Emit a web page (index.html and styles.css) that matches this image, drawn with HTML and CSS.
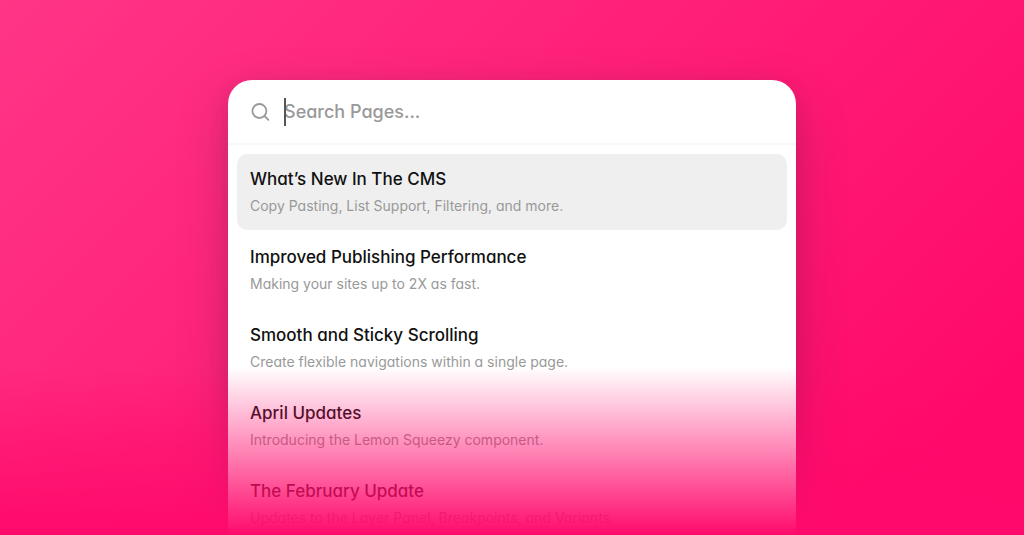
FILE: index.html
```html
<!DOCTYPE html>
<html lang="en">
<head>
<meta charset="UTF-8">
<meta name="viewport" content="width=device-width, initial-scale=1.0">
<title>Search Pages</title>
<link rel="stylesheet" href="styles.css">
</head>
<body>

<main class="stage">
    <div class="panel">
        <form class="search" role="search">
            <label class="search-icon" for="searchInput" aria-label="Search pages">
                <svg width="20" height="20" viewBox="0 0 20 20" fill="none" stroke="#999" stroke-width="1.8" stroke-linecap="round">
                    <circle cx="9.4" cy="9" r="7"/>
                    <path d="M14.5 14L18.4 17.8"/>
                </svg>
            </label>
            <div class="search-field">
                <input type="text" id="searchInput" name="search" placeholder="Search Pages..." autocomplete="off">
                <span class="caret"></span>
            </div>
        </form>
        <ul class="results">
            <li><a class="result active" href="#">
                <span class="result-title">What’s New In The CMS</span>
                <span class="result-text">Copy Pasting, List Support, Filtering, and more.</span>
            </a></li>
            <li><a class="result" href="#">
                <span class="result-title">Improved Publishing Performance</span>
                <span class="result-text">Making your sites up to 2X as fast.</span>
            </a></li>
            <li><a class="result" href="#">
                <span class="result-title">Smooth and Sticky Scrolling</span>
                <span class="result-text">Create flexible navigations within a single page.</span>
            </a></li>
            <li><a class="result" href="#">
                <span class="result-title">April Updates</span>
                <span class="result-text">Introducing the Lemon Squeezy component.</span>
            </a></li>
            <li><a class="result" href="#">
                <span class="result-title">The February Update</span>
                <span class="result-text">Updates to the Layer Panel, Breakpoints, and Variants.</span>
            </a></li>
        </ul>
    </div>
    <div class="fade"></div>
</main>

</body>
</html>
```

FILE: styles.css
```css
* {
    box-sizing: border-box;
}

body {
    margin: 0;
    font-family: Inter, "Liberation Sans", sans-serif;
    /* single-storey a */
    font-feature-settings: "cv11";
}

.stage {
    position: relative;
    display: flex;
    justify-content: center;
    align-items: flex-start;
    height: 100vh;
    padding: 80px 20px 0;
    overflow: hidden;
    background: linear-gradient(135deg, #ff3586 0%, #ff0064 110%);
}

.panel {
    width: 100%;
    max-width: 568px;
    background: #fff;
    border-radius: 24px;
    box-shadow: 0 20px 50px rgba(60, 30, 60, 0.25), 0 4px 20px rgba(60, 30, 60, 0.1);
}

.search {
    display: flex;
    align-items: center;
    gap: 14px;
    height: 65px;
    padding: 0 22px;
    border-bottom: 2px solid #f8f8f8;
}

.search-icon {
    display: flex;
}

.search-field {
    position: relative;
    flex: 1;
}

.search-field input {
    display: block;
    width: 100%;
    height: 28px;
    padding: 0;
    border: none;
    outline: none;
    background: none;
    color: #111;
    font-family: inherit;
    font-feature-settings: inherit;
    font-size: 18px;
    font-weight: 500;
}

.search-field input::placeholder {
    color: #999;
    opacity: 1;
}

.caret {
    position: absolute;
    top: 0;
    left: 0;
    width: 2px;
    height: 28px;
    background: #555;
}

.results {
    display: flex;
    flex-direction: column;
    gap: 2px;
    margin: 0;
    padding: 9px;
    list-style: none;
}

.result {
    display: flex;
    flex-direction: column;
    gap: 4px;
    padding: 13px;
    border-radius: 10px;
    text-decoration: none;
}

.result.active {
    background: #efefef;
}

.result-title {
    color: #111;
    font-size: 17px;
    font-weight: 500;
    line-height: 24px;
}

.result-text {
    color: #999;
    font-size: 14px;
    line-height: 22px;
}

/* bottom of the list dissolves into the background */
.fade {
    position: absolute;
    right: 0;
    bottom: 0;
    left: 0;
    height: 168px;
    background: linear-gradient(rgba(255, 10, 108, 0), #ff0a6c);
    pointer-events: none;
}
```
